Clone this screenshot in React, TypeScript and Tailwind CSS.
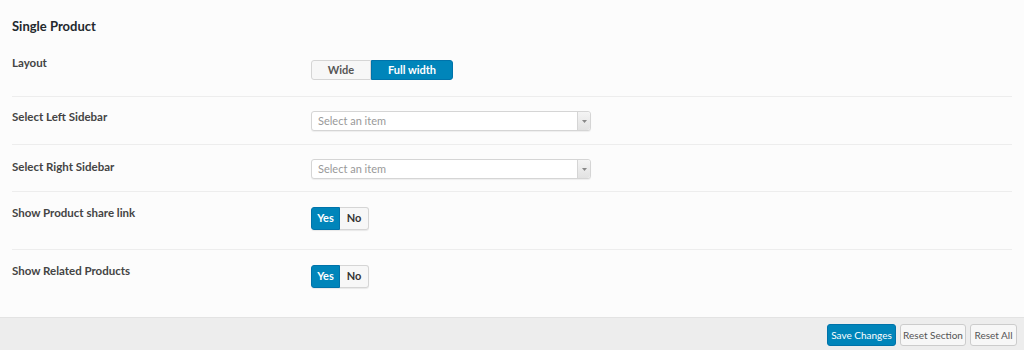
import React from "react";

const font = { fontFamily: "Lato, 'Open Sans', sans-serif" };

function Row({ label, labelPt, ctrlPt, h, last, children }: { label: string; labelPt: string; ctrlPt: string; h: string; last?: boolean; children: React.ReactNode }) {
  return (
    <div className={`flex ${h} ${last ? "" : "border-b border-[#ededed]"}`}>
      <div className={`w-[299px] ${labelPt} text-[11.5px] leading-4 font-bold text-[#444]`}>{label}</div>
      <div className={ctrlPt}>{children}</div>
    </div>
  );
}

function Select() {
  return (
    <div className="flex w-[280px] h-[20px] border border-[#d5d5d5] rounded-[3px] bg-white shadow-[0_1px_1px_rgba(0,0,0,0.06)]">
      <div className="flex-1 pl-[6px] text-[11px] leading-[18px] text-[#999]">Select an item</div>
      <div className="w-[13px] border-l border-[#d5d5d5] bg-gradient-to-b from-[#f4f4f4] to-[#e2e2e2] rounded-r-[3px] flex items-center justify-center">
        <svg width="5" height="3" viewBox="0 0 5 3"><path d="M0 0h5L2.5 3z" fill="#888" /></svg>
      </div>
    </div>
  );
}

function YesNo() {
  return (
    <div className="flex h-[23px] rounded-[3px] shadow-[0_1px_1px_rgba(0,0,0,0.08)]">
      <div className="w-[29px] flex items-center justify-center bg-[#0085ba] border border-[#0073aa] rounded-l-[3px] text-white text-[11px] font-bold">Yes</div>
      <div className="w-[29px] flex items-center justify-center bg-[#f7f7f7] border border-l-0 border-[#d5d5d5] rounded-r-[3px] text-[#333] text-[11px] font-bold">No</div>
    </div>
  );
}

export default function App() {
  return (
    <div className="w-[1024px] h-[350px] bg-[#fcfcfc] overflow-hidden flex flex-col" style={font}>
      <div className="flex-1 px-3">
        <div className="h-[42px] pt-4 text-[13px] leading-5 font-bold text-[#23282d]">Single Product</div>
        <div className="w-[1000px]">
          <Row label="Layout" h="h-[55px]" labelPt="pt-[13px]" ctrlPt="pt-[18px]">
            <div className="flex h-[20px]">
              <div className="w-[60px] flex items-center justify-center bg-[#f7f7f7] border border-[#d5d5d5] rounded-l-[3px] text-[#555] text-[11px] font-bold">Wide</div>
              <div className="w-[82px] flex items-center justify-center bg-[#0085ba] border border-[#0073aa] rounded-r-[3px] text-white text-[11px] font-bold">Full width</div>
            </div>
          </Row>
          <Row label="Select Left Sidebar" h="h-[48px]" labelPt="pt-[12px]" ctrlPt="pt-[14px]">
            <Select />
          </Row>
          <Row label="Select Right Sidebar" h="h-[47px]" labelPt="pt-[14px]" ctrlPt="pt-[14px]">
            <Select />
          </Row>
          <Row label="Show Product share link" h="h-[58px]" labelPt="pt-[13px]" ctrlPt="pt-[15px]">
            <YesNo />
          </Row>
          <Row label="Show Related Products" h="h-[67px]" labelPt="pt-[13px]" ctrlPt="pt-[15px]" last>
            <YesNo />
          </Row>
        </div>
      </div>
      <div className="h-[33px] bg-[#ededed] border-t border-[#e3e3e3] flex items-start justify-end gap-[4px] pr-[7px] pt-[6px]">
        <button className="w-[69px] h-[22px] bg-[#0085ba] border border-[#0073aa] rounded-[3px] text-white text-[10px] whitespace-nowrap">Save Changes</button>
        <button className="w-[66px] h-[22px] bg-[#f7f7f7] border border-[#cccccc] rounded-[3px] text-[#555] text-[10px] whitespace-nowrap">Reset Section</button>
        <button className="w-[47px] h-[22px] bg-[#f7f7f7] border border-[#cccccc] rounded-[3px] text-[#555] text-[10px] whitespace-nowrap">Reset All</button>
      </div>
    </div>
  );
}
